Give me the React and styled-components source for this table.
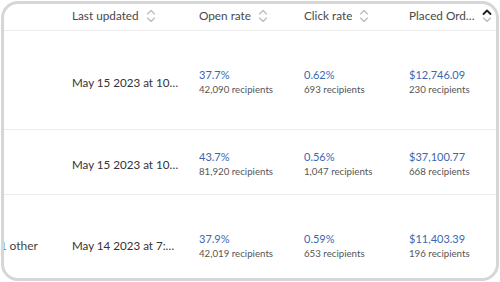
import React from "react";
import styled, { createGlobalStyle } from "styled-components";

const Global = createGlobalStyle`
  html, body { margin: 0; padding: 0; background: #ffffff; }
  body { font-family: Lato, "Open Sans", Arial, sans-serif; }
  * { box-sizing: border-box; }
`;

const COLS = "56px 127px 105px 105px 99px";

const Card = styled.div`
  margin: 1px;
  width: 498px;
  height: 280px;
  border: 3px solid #d6d6d6;
  border-radius: 17px;
  background: #fff;
  overflow: hidden;
`;

const Row = styled.div`
  display: grid;
  grid-template-columns: ${COLS};
  height: ${(p) => p.$h}px;
  border-bottom: 1px solid #ececec;
  align-items: center;
  padding-bottom: ${(p) => p.$pb || 0}px;
`;

const HeadCell = styled.div`
  display: flex;
  align-items: center;
  gap: ${(p) => (p.$last ? 4 : 7)}px;
  padding: 0 ${(p) => (p.$last ? 4 : 12)}px 0 12px;
  min-width: 0;
  font-size: 11.75px;
  color: #484848;
  white-space: nowrap;
`;

const HeadLabel = styled.span`
  overflow: hidden;
  text-overflow: ellipsis;
  min-width: 0;
  flex: ${(p) => (p.$grow ? 1 : "0 1 auto")};
`;

const Cell = styled.div`
  padding: 0 ${(p) => (p.$wide ? 7 : 12)}px 0 12px;
  min-width: 0;
  margin-top: ${(p) => p.$shift || 0}px;
`;

const EdgeCell = styled.div`
  display: flex;
  justify-content: flex-end;
  overflow: hidden;
  white-space: nowrap;
  padding-right: 22px;
  font-size: 12px;
  color: #444;
  margin-top: ${(p) => p.$shift || 0}px;
`;

const EdgeLink = styled.span`
  color: #3a68b0;
  margin-right: 3px;
`;

const DateText = styled.div`
  font-size: 11.6px;
  color: #333;
  white-space: nowrap;
  overflow: hidden;
  text-overflow: ellipsis;
`;

const Value = styled.div`
  font-size: 11px;
  color: #3a68b0;
  line-height: 15px;
`;

const Sub = styled.div`
  font-size: 9.7px;
  color: #555;
  line-height: 15px;
  white-space: nowrap;
`;

const SortIcon = ({ active }) => (
  <svg width="10" height="16" viewBox="0 0 10 16" fill="none" style={{ flex: "none" }}>
    <path
      d="M1.5 6 L5 2.5 L8.5 6"
      stroke={active ? "#222" : "#b8b8b8"}
      strokeWidth={active ? 1.9 : 1.1}
      strokeLinecap="round"
      strokeLinejoin="round"
    />
    <path
      d="M1.5 10 L5 13.5 L8.5 10"
      stroke="#b8b8b8"
      strokeWidth="1.1"
      strokeLinecap="round"
      strokeLinejoin="round"
    />
  </svg>
);

const rows = [
  { h: 99, shift: 4, edge: null, date: "May 15 2023 at 10:32 AM", open: ["37.7%", "42,090"], click: ["0.62%", "693"], placed: ["$12,746.09", "230"] },
  { h: 65, shift: 4, edge: null, date: "May 15 2023 at 10:05 AM", open: ["43.7%", "81,920"], click: ["0.56%", "1,047"], placed: ["$37,100.77", "668"] },
  { h: 102, shift: 0, edge: true, date: "May 14 2023 at 7:30 PM", open: ["37.9%", "42,019"], click: ["0.59%", "653"], placed: ["$11,403.39", "196"] },
];

const Metric = ({ v, n, shift }) => (
  <Cell $shift={shift}>
    <Value>{v}</Value>
    <Sub>{n} recipients</Sub>
  </Cell>
);

export default function App() {
  return (
    <>
      <Global />
      <Card>
        <Row $h={27} $pb={3}>
          <HeadCell />
          <HeadCell>
            <HeadLabel>Last updated</HeadLabel>
            <SortIcon />
          </HeadCell>
          <HeadCell>
            <HeadLabel>Open rate</HeadLabel>
            <SortIcon />
          </HeadCell>
          <HeadCell>
            <HeadLabel>Click rate</HeadLabel>
            <SortIcon />
          </HeadCell>
          <HeadCell $last>
            <HeadLabel $grow>Placed Orders</HeadLabel>
            <SortIcon active />
          </HeadCell>
        </Row>
        {rows.map((r, i) => (
          <Row key={i} $h={r.h}>
            <EdgeCell $shift={r.shift}>
              {r.edge ? (
                <>
                  <EdgeLink>+1</EdgeLink>other
                </>
              ) : null}
            </EdgeCell>
            <Cell $shift={r.shift} $wide>
              <DateText>{r.date}</DateText>
            </Cell>
            <Metric v={r.open[0]} n={r.open[1]} shift={r.shift} />
            <Metric v={r.click[0]} n={r.click[1]} shift={r.shift} />
            <Metric v={r.placed[0]} n={r.placed[1]} shift={r.shift} />
          </Row>
        ))}
      </Card>
    </>
  );
}
